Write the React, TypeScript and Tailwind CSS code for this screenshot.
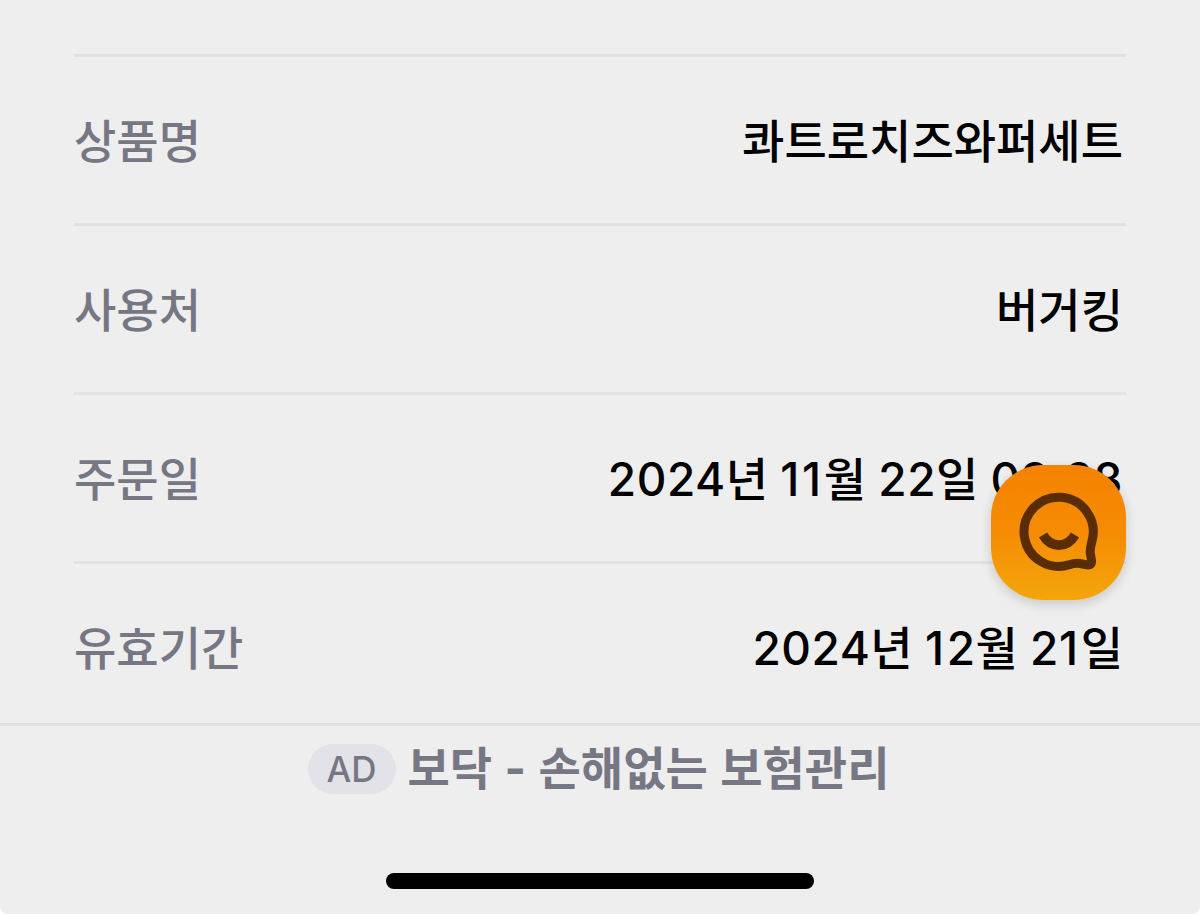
import React from "react";

type OrderInfo = {
  label: string;
  value: string;
};

const orderInfo: OrderInfo[] = [
  { label: "상품명", value: "콰트로치즈와퍼세트" },
  { label: "사용처", value: "버거킹" },
  { label: "주문일", value: "2024년 11월 22일 09:28" },
  { label: "유효기간", value: "2024년 12월 21일" },
];

// digits are set a little looser than the hangul, the narrow "1" most of all
const digitTracking = (part: string) => {
  if (/^1+$/.test(part)) return "tracking-[2.6px]";
  if (/^[\d:]+$/.test(part)) return "tracking-[0.5px]";
  return "";
};

const InfoRow: React.FC<OrderInfo> = ({ label, value }) => {
  const parts = value.split(/(1+|[02-9:]+)/).filter(Boolean);

  return (
    <div className="flex flex-row justify-between items-center h-[169px] border-t-3 border-[#e2e2e6] pt-[2px] pr-[3px]">
      <span className="text-[#777784]">{label}</span>
      <span className="text-black">
        {parts.map((part, index) => (
          <span key={index} className={digitTracking(part)}>
            {part}
          </span>
        ))}
      </span>
    </div>
  );
};

const ChatButton: React.FC = () => {
  return (
    <button
      aria-label="chat"
      className="absolute left-[991px] top-[465px] w-[135px] h-[135px] rounded-[52px] bg-linear-to-b from-[#f58200] via-[#f58c03] to-[#f3a60a] shadow-[0_4px_12px_rgba(0,0,0,0.16)]"
    >
      <svg viewBox="0 0 135 135" className="w-full h-full" fill="none" stroke="#5a2d00" strokeWidth="9">
        <path
          d="M101 76 A34.6 34.6 0 1 0 79 99.5 C83 98 86 97.8 89 98.5 L96 99.8 C99.5 100.3 101 98.6 100.5 95.5 L99.3 88 C98.8 84 99.8 80.5 101 76 Z"
          strokeLinejoin="round"
        />
        <path d="M52 70 C60 83.5 76 83.5 84 70" strokeWidth="9.6" />
      </svg>
    </button>
  );
};

const App: React.FC = () => {
  return (
    <div className="bg-white">
      <div className="relative flex flex-col w-[1200px] h-[914px] overflow-hidden rounded-b-lg bg-[#eeeeee] font-['Inter','Noto_Sans_CJK_KR',sans-serif] font-medium text-[46px] leading-none whitespace-nowrap">
        <div className="h-[723px] shrink-0 overflow-hidden px-[74px] pt-[54px]">
          {orderInfo.map((info) => (
            <InfoRow key={info.label} label={info.label} value={info.value} />
          ))}
        </div>

        <footer className="flex flex-col items-center grow border-t-3 border-[#e0e0e6]">
          <div className="flex flex-row items-center gap-3 mt-[18px] pr-[3px] text-[#777784]">
            <span className="flex items-center justify-center w-[88px] h-[50px] rounded-full bg-[#e2e2e9] text-[35px]">
              AD
            </span>
            <span className="font-bold pb-[2px] [word-spacing:1.5px]">보닥 - 손해없는 보험관리</span>
          </div>
          <div className="w-[428px] h-[16px] mt-auto mb-[25px] rounded-full bg-black"></div>
        </footer>

        <ChatButton />
      </div>
    </div>
  );
};

export default App;
